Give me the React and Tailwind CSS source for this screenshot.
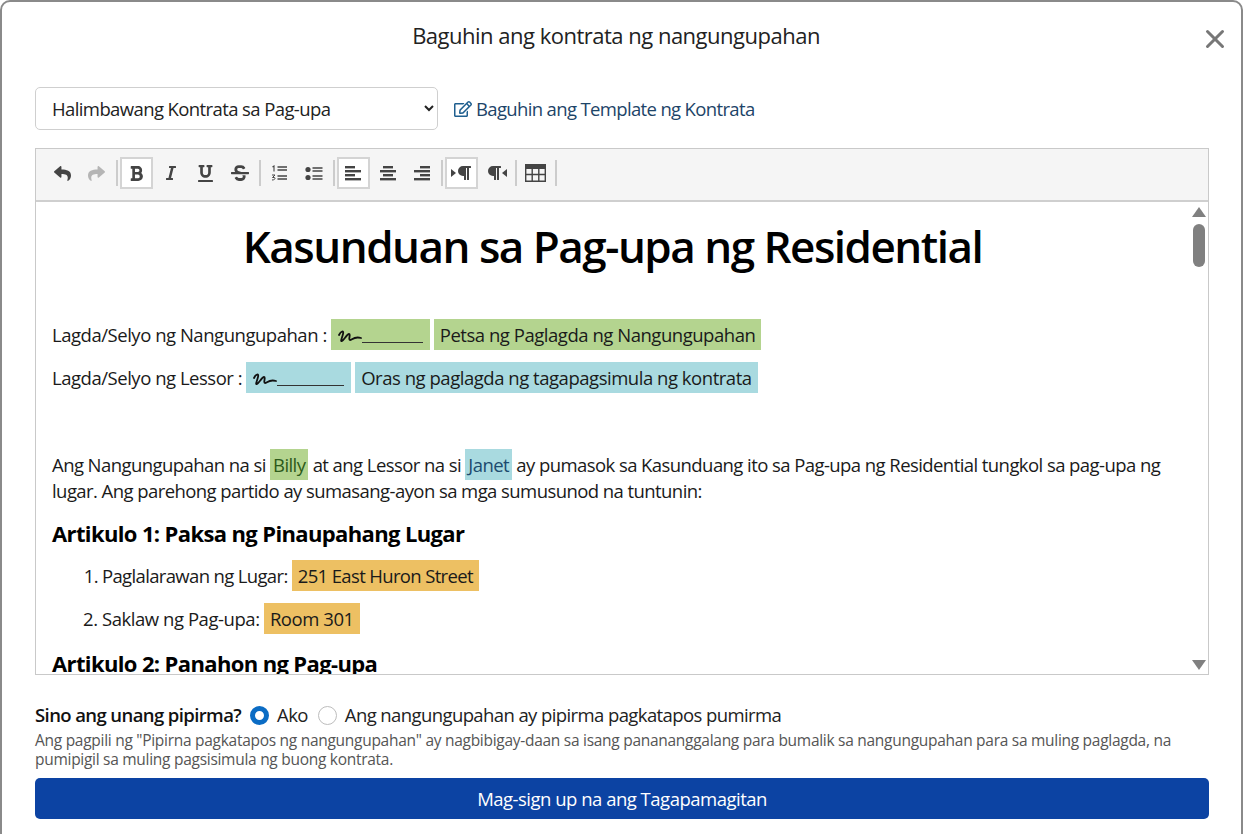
import { X } from "lucide-react";
import {
  FaReply,
  FaShare,
  FaBold,
  FaItalic,
  FaUnderline,
  FaStrikethrough,
  FaParagraph,
  FaRegEdit,
} from "react-icons/fa";

const font = "font-['Open_Sans','Noto_Sans',sans-serif]";

function ToolBtn({ children, active, muted }) {
  return (
    <span
      className={`mx-[0.75px] flex h-[32px] w-[33px] items-center justify-center ${
        active ? "border-2 border-[#d4d4d4] bg-white" : ""
      } ${muted ? "text-[#b5b5b5]" : "text-[#444]"}`}
    >
      {children}
    </span>
  );
}

function Sep() {
  return <span className="mx-[1.5px] h-[26px] w-[2px] bg-[#cccccc]" />;
}

function Triangle({ dir }) {
  return (
    <svg width="5" height="8" viewBox="0 0 5 8" className="fill-current">
      <path d={dir === "right" ? "M0 0 L5 4 L0 8 Z" : "M5 0 L0 4 L5 8 Z"} />
    </svg>
  );
}

// four bars, x offsets decide left / center / right
function AlignIcon({ rows }) {
  return (
    <svg width="16" height="15" viewBox="0 0 16 15" className="fill-current">
      {rows.map(([x, w], i) => (
        <rect key={i} x={x} y={i * 4} width={w} height="2.4" />
      ))}
    </svg>
  );
}

function OlIcon() {
  return (
    <svg width="17" height="16" viewBox="0 0 17 16" fill="none" stroke="currentColor">
      <path d="M1.5 2 L3 1 V6.5" strokeWidth="1.1" />
      <path d="M1 10 H4 L1.5 12.5 H3.5 C4.5 13 4.2 15 1 15" strokeWidth="1" />
      <path d="M6.5 2 H16 M6.5 5 H16 M6.5 11 H16 M6.5 14 H16" strokeWidth="1.5" />
    </svg>
  );
}

function UlIcon() {
  return (
    <svg width="18" height="15" viewBox="0 0 18 15" fill="none" stroke="currentColor">
      <circle cx="3" cy="3.5" r="2.6" fill="currentColor" stroke="none" />
      <circle cx="3" cy="11.5" r="2.6" fill="currentColor" stroke="none" />
      <path d="M7.5 2 H17.5 M7.5 5 H17.5 M7.5 10 H17.5 M7.5 13 H17.5" strokeWidth="1.6" />
    </svg>
  );
}

function TableIcon() {
  return (
    <svg width="21" height="18" viewBox="0 0 21 18" fill="none" stroke="currentColor" strokeWidth="1.4">
      <rect x="0" y="0" width="21" height="5" fill="currentColor" stroke="none" />
      <path d="M0.7 4 V17.3 H20.3 V4 M0.7 10.5 H20.3 M7.2 4 V17.3 M13.8 4 V17.3" />
    </svg>
  );
}

function Signature({ bg, line }) {
  return (
    <span className={`mr-[4px] inline-flex h-[31px] items-end pb-[6px] pl-[7px] pr-[7px] ${bg} ${line}`}>
      <svg width="24" height="15" viewBox="0 0 24 15" fill="none" stroke="#111" strokeWidth="1.8" strokeLinecap="round" strokeLinejoin="round" className="shrink-0">
        <path d="M1 6 C3 2 6 1 5 5 C4 9 2 13 4 12 C6 11 9 5 11 5 C13 5 10 11 12 11 C14 11 16 7 23 9" />
      </svg>
      <span className="mb-[1px] h-[1.5px] flex-1 bg-[#333]" />
    </span>
  );
}

function Tag({ bg, children }) {
  return <span className={`inline-block h-[31px] px-[6px] leading-[31px] ${bg}`}>{children}</span>;
}

export default function App() {
  return (
    <div className={`${font} h-[834px] w-[1243px] overflow-hidden bg-white text-[#111]`}>
      <div className="flex h-[844px] flex-col rounded-t-[10px] border-2 border-[#8a8a8a] bg-white pl-[33px] pr-[32px]">
        <div className="flex h-[85px] shrink-0 items-start pt-[15px]">
          <h1 className="flex-1 pr-[3px] text-center text-[22px] leading-[36px] tracking-[-0.5px] text-[#222]">
            Baguhin ang kontrata ng nangungupahan
          </h1>
          <X className="mr-[-21px] mt-[7px] text-[#777]" size={30} strokeWidth={2.4} />
        </div>

        <div className="flex h-[61px] shrink-0 items-start gap-[16px]">
          <select
            defaultValue="sample"
            className="h-[43px] w-[403px] rounded-[5px] border border-[#cfcfcf] bg-white pl-[12px] pr-[8px] text-[18.5px] tracking-[-0.6px] text-[#222]"
          >
            <option value="sample">Halimbawang Kontrata sa Pag-upa</option>
          </select>
          <a className="flex h-[43px] items-center gap-[4px] text-[18.5px] tracking-[-0.65px] text-[#1d4468]">
            <FaRegEdit size={18} className="text-[#1f5f8f]" />
            Baguhin ang Template ng Kontrata
          </a>
        </div>

        <div className="flex h-[527px] shrink-0 flex-col border border-[#c9c9c9]">
          <div className="flex h-[53px] shrink-0 items-center border-b-2 border-[#cfcfcf] bg-[#f5f5f5] pb-[3px] pl-[9px]">
            <ToolBtn><FaReply size={17} /></ToolBtn>
            <ToolBtn muted><FaShare size={17} /></ToolBtn>
            <Sep />
            <ToolBtn active><FaBold size={17} /></ToolBtn>
            <ToolBtn><FaItalic size={16} /></ToolBtn>
            <ToolBtn><FaUnderline size={17} /></ToolBtn>
            <ToolBtn><FaStrikethrough size={18} /></ToolBtn>
            <Sep />
            <ToolBtn><OlIcon /></ToolBtn>
            <ToolBtn><UlIcon /></ToolBtn>
            <Sep />
            <ToolBtn active><AlignIcon rows={[[0, 10], [0, 16], [0, 10], [0, 16]]} /></ToolBtn>
            <ToolBtn><AlignIcon rows={[[3, 10], [0, 16], [3, 10], [0, 16]]} /></ToolBtn>
            <ToolBtn><AlignIcon rows={[[6, 10], [0, 16], [6, 10], [0, 16]]} /></ToolBtn>
            <Sep />
            <ToolBtn active>
              <Triangle dir="right" />
              <FaParagraph size={16} />
            </ToolBtn>
            <ToolBtn>
              <FaParagraph size={16} />
              <Triangle dir="left" />
            </ToolBtn>
            <Sep />
            <ToolBtn><TableIcon /></ToolBtn>
            <Sep />
          </div>

          <div className="flex min-h-0 flex-1">
            <div className="min-h-0 flex-1 overflow-hidden pl-[16px] pr-[17px] text-[18.5px] leading-[26px] tracking-[-0.5px] text-[#1a1a1a]">
              <h2 className="mt-[14px] text-center text-[44px] font-semibold leading-[60px] tracking-[-1.5px] text-black">
                Kasunduan sa Pag-upa ng Residential
              </h2>
              <p className="mt-[43px] flex h-[31px] items-center tracking-[-0.47px]">
                <span className="mr-[4px]">Lagda/Selyo ng Nangungupahan :</span>
                <Signature bg="bg-[#b4d48f]" line="w-[99px]" />
                <Tag bg="bg-[#b4d48f]">Petsa ng Paglagda ng Nangungupahan</Tag>
              </p>
              <p className="mt-[12px] flex h-[31px] items-center tracking-[-0.47px]">
                <span className="mr-[4px]">Lagda/Selyo ng Lessor :</span>
                <Signature bg="bg-[#a9dae0]" line="w-[105px]" />
                <Tag bg="bg-[#a9dae0]">Oras ng paglagda ng tagapagsimula ng kontrata</Tag>
              </p>
              <p className="mt-[59px] tracking-[-0.57px]">
                Ang Nangungupahan na si{" "}
                <span className="bg-[#b4d48f] px-[3px] py-[3px] text-[#2c5a1a]">Billy</span> at ang Lessor na si{" "}
                <span className="bg-[#a9dae0] px-[3px] py-[3px] text-[#1c4a6e]">Janet</span> ay pumasok sa Kasunduang ito sa
                Pag-upa ng Residential tungkol sa pag-upa ng lugar. Ang parehong partido ay sumasang-ayon sa mga sumusunod na tuntunin:
              </p>
              <h3 className="mt-[12px] text-[22px] font-bold leading-[34px] tracking-[-0.63px] text-black">
                Artikulo 1: Paksa ng Pinaupahang Lugar
              </h3>
              <ol className="mt-[10px] list-decimal pl-[50px] tracking-[-0.65px]">
                <li className="h-[31px] leading-[31px]">
                  Paglalarawan ng Lugar: <Tag bg="bg-[#edc063]">251 East Huron Street</Tag>
                </li>
                <li className="mt-[12px] h-[31px] leading-[31px] tracking-[-0.45px]">
                  Saklaw ng Pag-upa: <Tag bg="bg-[#edc063]">Room 301</Tag>
                </li>
              </ol>
              <h3 className="mt-[12px] text-[22px] font-bold leading-[34px] tracking-[-0.63px] text-black">
                Artikulo 2: Panahon ng Pag-upa
              </h3>
            </div>
            <div className="flex w-[18px] shrink-0 flex-col items-center pt-[5px]">
              <span className="h-0 w-0 border-x-[7px] border-b-[10px] border-x-transparent border-b-[#808080]" />
              <span className="mt-[7px] h-[43px] w-[12px] rounded-full bg-[#808080]" />
              <span className="mt-auto mb-[4px] h-0 w-0 border-x-[7px] border-t-[10px] border-x-transparent border-t-[#808080]" />
            </div>
          </div>
        </div>

        <div className="mt-[26px] flex h-[28px] shrink-0 items-center text-[18.5px] tracking-[-0.6px] text-[#222]">
          <span className="font-semibold text-[#111]">Sino ang unang pipirma?</span>
          <input
            type="radio"
            name="first"
            defaultChecked
            className="ml-[9px] mr-[8px] h-[19px] w-[19px] appearance-none rounded-full border-[5px] border-[#0b6cc4] bg-white"
          />
          <span>Ako</span>
          <input
            type="radio"
            name="first"
            className="ml-[10px] mr-[8px] h-[19px] w-[19px] appearance-none rounded-full border border-[#bdbdbd] bg-white"
          />
          <span>Ang nangungupahan ay pipirma pagkatapos pumirma</span>
        </div>
        <p className="mt-[2px] shrink-0 text-[15.5px] leading-[19px] tracking-[-0.28px] text-[#555]">
          Ang pagpili ng "Pipirna pagkatapos ng nangungupahan" ay nagbibigay-daan sa isang panananggalang para bumalik sa nangungupahan para sa muling paglagda, na pumipigil sa muling pagsisimula ng buong kontrata.
        </p>
        <button className="mt-[9px] h-[41px] shrink-0 rounded-[5px] bg-[#0c43a3] text-[18.5px] tracking-[-0.5px] text-white">
          Mag-sign up na ang Tagapamagitan
        </button>
      </div>
    </div>
  );
}
